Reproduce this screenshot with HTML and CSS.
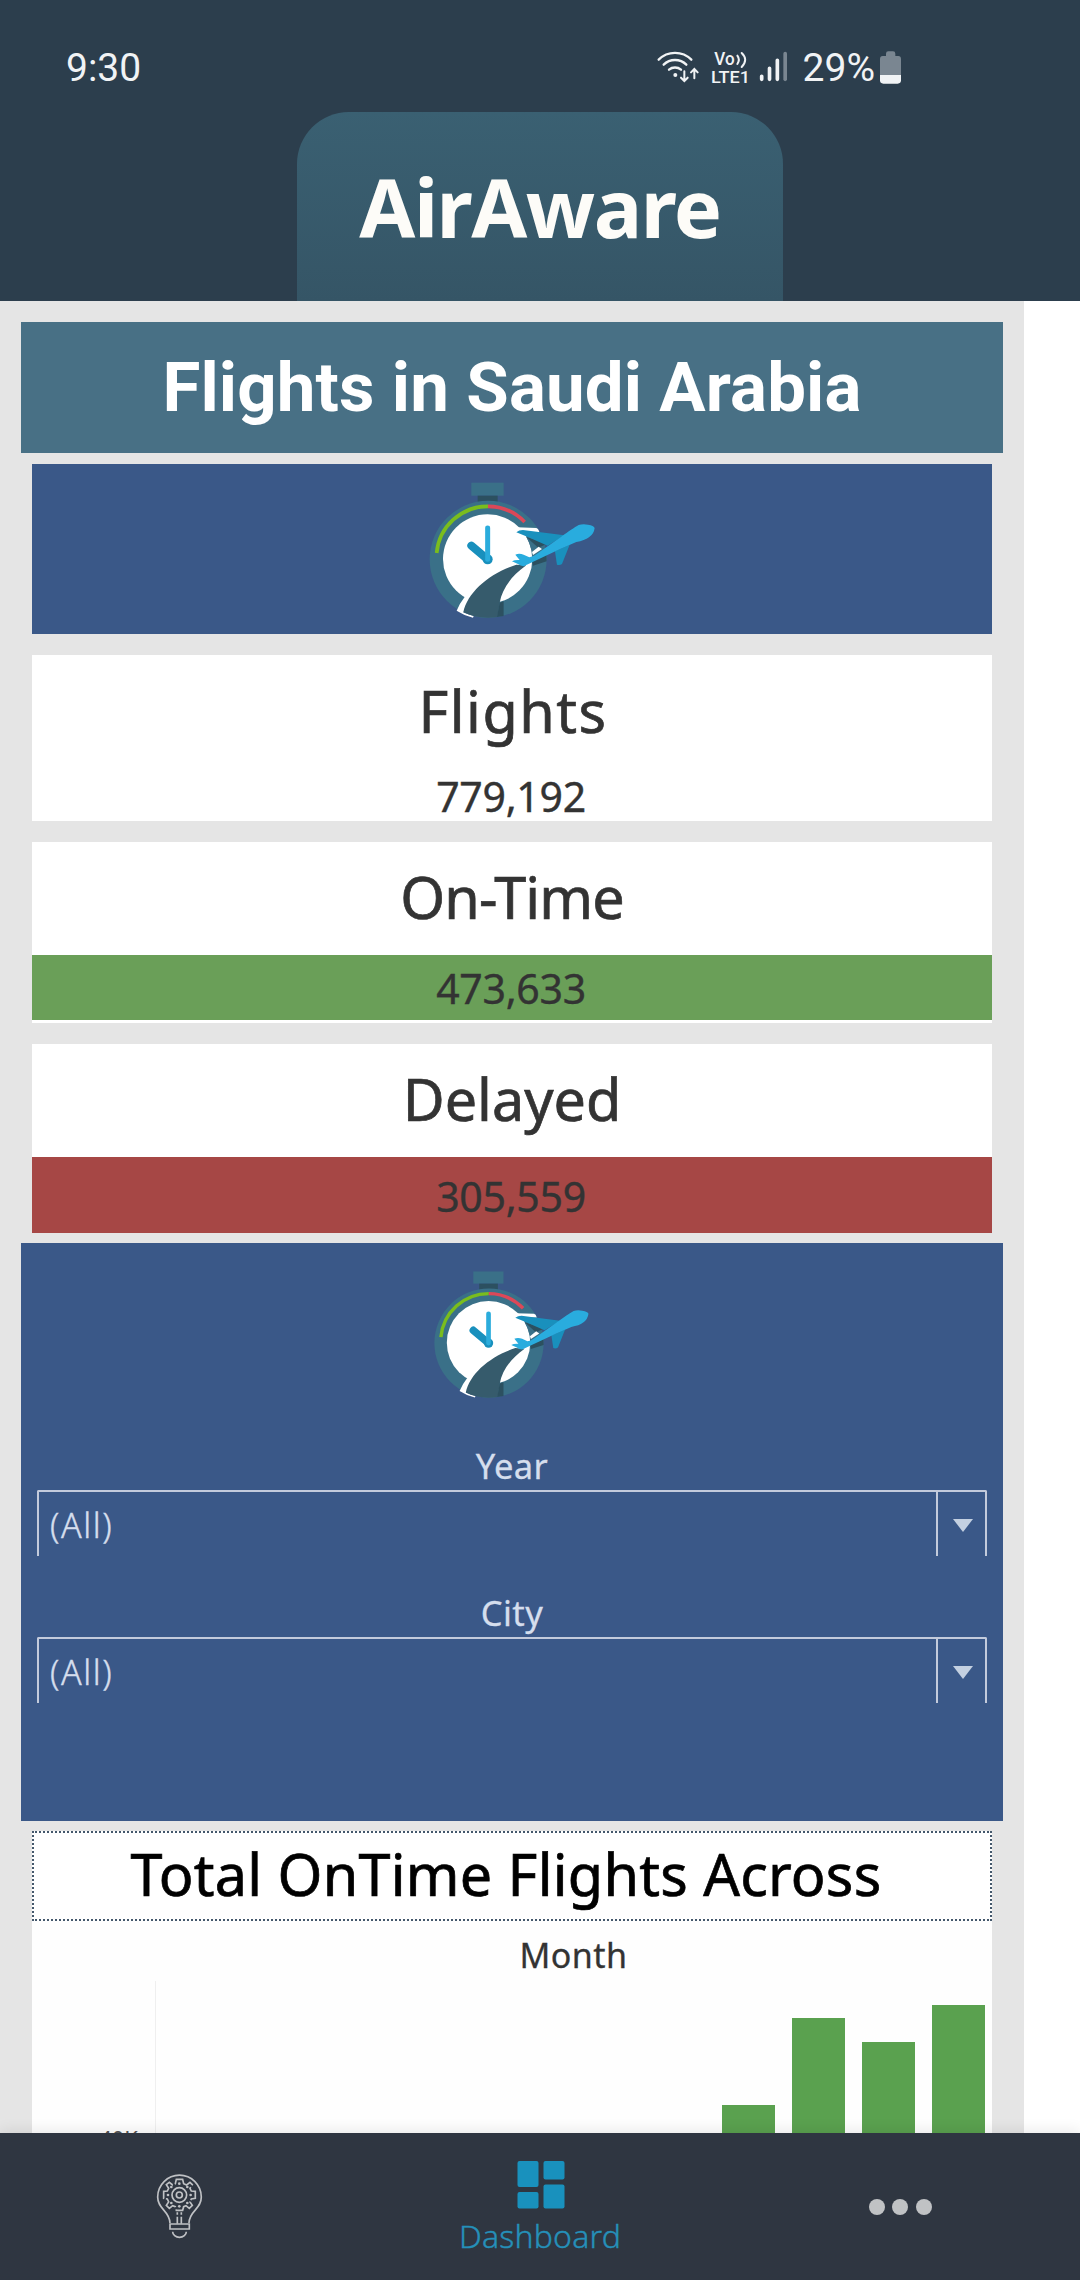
FILE: index.html
```html
<!DOCTYPE html>
<html lang="en">
<head>
<meta charset="utf-8">
<title>AirAware</title>
<link rel="stylesheet" href="styles.css">
</head>
<body>
<svg class="defs" width="0" height="0" aria-hidden="true">
  <symbol id="logo" viewBox="76 60 520 425">
    <rect x="215" y="68" width="97" height="39" fill="#3a7088"/>
    <rect x="234" y="107" width="60" height="20" fill="#2c5060"/>
    <circle cx="265.5" cy="298" r="175.5" fill="#3a7088"/>
    <circle cx="264" cy="297" r="134" fill="#fff"/>
    <path d="M111 279A154 154 0 0 1 265 139" fill="none" stroke="#7abd1d" stroke-width="11"/>
    <path d="M265 139A154 154 0 0 1 375 186" fill="none" stroke="#dc4858" stroke-width="11"/>
    <path d="M352 202L410 204Q416 205 419 216L372 216Z" fill="#fff"/>
    <path d="M380 231L445 250L417 262L397 276Q391 250 380 231Z" fill="#3a7088"/>
    <path d="M380 231L445 250L416 263Z" fill="#2c5060"/>
    <path d="M397 276L417 260L427 267L400 285Z" fill="#fff"/>
    <path d="M398 304L440 276L441 304L400 317Z" fill="#2c5060"/>
    <path d="M215 257L264 298" stroke="#1990bd" stroke-width="24" stroke-linecap="round"/>
    <circle cx="264" cy="298" r="15" fill="#1990bd"/>
    <path d="M264 204V298" stroke="#2bacdc" stroke-width="15" stroke-linecap="round"/>
    <path d="M195 411Q180 430 171 452Q192 466 220 473L222 468Q205 464 191 457L240 390Z" fill="#fff"/>
    <path d="M191 457C204 395 270 340 350 314L380 316C335 348 308 385 300 428L293 471C255 477 220 471 191 457Z" fill="#365b6c"/>
    <path d="M300 428L312 424V468L292 471Z" fill="#2c5060"/>
    <path d="M350 217Q358 210 370 210L494 226L444 257L383 230Z" fill="#1990bd"/>
    <path d="M466 274L510 254L487 312Q480 317 472 314Z" fill="#1990bd"/>
    <path d="M372 319Q362 318 355 312L337 304Q345 299 360 300L347 284Q358 279 372 284L389 292Q400 291 410 283L487 229C505 215 525 202 537 195Q550 191 565 194Q583 197 585 204Q583 222 568 232Q555 242 530 246L480 268Z" fill="#29acde"/>
  </symbol>
</svg>

<header class="header">
  <div class="status">
    <span class="status-time">9:30</span>
    <div class="status-right">
      <svg class="signals" viewBox="50 60 395 110">
        <g fill="none" stroke="#f1f3f5" stroke-linecap="round">
          <path d="M55 92A69 69 0 0 1 153 92" stroke-width="7"/>
          <path d="M70 107A48 48 0 0 1 138 107" stroke-width="7"/>
          <path d="M86 122A28 28 0 0 1 122 122" stroke-width="7"/>
          <path d="M132 127V155M122 146L132 156L142 146" stroke-width="6"/>
          <path d="M162 148V121M152 130L162 120L172 130" stroke-width="6"/>
          <path d="M291 80Q300 92 291 105M304 72Q325 92 304 114" stroke-width="6"/>
        </g>
        <circle cx="105" cy="138" r="6" fill="#f1f3f5"/>
        <text class="signal-text" x="222" y="108" font-size="53" textLength="61" lengthAdjust="spacingAndGlyphs">Vo</text>
        <text class="signal-text" x="212" y="161" font-size="52" textLength="117" lengthAdjust="spacingAndGlyphs">LTE1</text>
        <g stroke-width="11" stroke-linecap="round" stroke="#f1f3f5">
          <path d="M364 142V151M387.500 118V151M411 94V151"/>
          <path d="M434.500 74V151" stroke="#7a8691"/>
        </g>
      </svg>
      <span class="battery-text">29%</span>
      <svg class="battery" viewBox="0 0 63 99">
        <path d="M18 8Q18 1 25 1H39Q46 1 46 8V15H55Q63 15 63 24V73H0V24Q0 15 8 15H18Z" fill="#7a8691"/>
        <path d="M0 72H63V88Q63 98 53 98H10Q0 98 0 88Z" fill="#f1f3f5"/>
      </svg>
    </div>
  </div>
  <h1 class="brand">AirAware</h1>
</header>

<main class="content">
  <div class="dashboard">
    <h2 class="title">Flights in Saudi Arabia</h2>
    <div class="banner"><svg class="logo"><use href="#logo"/></svg></div>

    <section class="card card-flights">
      <h3 class="card-label wide">Flights</h3>
      <div class="card-value">779,192</div>
    </section>
    <section class="card card-ontime">
      <h3 class="card-label tight">On-Time</h3>
      <div class="card-value">473,633</div>
    </section>
    <section class="card card-delayed">
      <h3 class="card-label">Delayed</h3>
      <div class="card-value">305,559</div>
    </section>

    <section class="filters">
      <svg class="logo logo-small"><use href="#logo"/></svg>
      <div class="filter">
        <div class="filter-label">Year</div>
        <div class="select"><span class="select-value">(All)</span><span class="select-arrow"><svg viewBox="0 0 20 13"><path d="M0 0H20L10 13Z"/></svg></span></div>
      </div>
      <div class="filter">
        <div class="filter-label">City</div>
        <div class="select"><span class="select-value">(All)</span><span class="select-arrow"><svg viewBox="0 0 20 13"><path d="M0 0H20L10 13Z"/></svg></span></div>
      </div>
    </section>

    <h3 class="chart-title">Total OnTime Flights Across</h3>
    <section class="chart">
      <div class="chart-heading">Month</div>
      <div class="axis">40K</div>
      <div class="plot">
        <div class="bar" style="height:28.500px"></div>
        <div class="bar" style="height:115.500px"></div>
        <div class="bar" style="height:91.500px"></div>
        <div class="bar" style="height:128.500px"></div>
      </div>
    </section>
  </div>
</main>

<nav class="nav">
  <a class="nav-item nav-tips">
    <svg class="bulb" viewBox="78 100 142 198" fill="none" stroke="#bfc1c4" stroke-width="5">
      <path d="M120 250C119 212 83 210 83 172A65.500 65.500 0 0 1 214 172C214 210 178 212 177 250"/>
      <path d="M120 253H178V268H120ZM128 276A20.500 17 0 0 0 169 276"/>
      <path d="M142 218V225M154 218V225M142 231V252M154 231V252"/>
      <circle cx="148" cy="166" r="22"/>
      <circle cx="148" cy="166" r="9"/>
      <path d="M136 132L139 119H158L161 132L170 136L180 128L187 135L180 146L184 154L196 155V176L184 178L180 187L187 197L178 206L168 198L161 201L158 212H139L136 201L128 198L118 206L109 197L116 187L112 178L101 176V155L112 154L116 146L109 135L118 128L128 136Z" stroke-dasharray="80 7 62 5"/>
      <g fill="#bfc1c4" stroke="none"><circle cx="148" cy="132" r="4"/><circle cx="148" cy="200" r="4"/><circle cx="114" cy="166" r="4"/><circle cx="182" cy="166" r="4"/><circle cx="124" cy="142" r="4"/><circle cx="172" cy="142" r="4"/><circle cx="124" cy="190" r="4"/><circle cx="172" cy="190" r="4"/></g>
    </svg>
  </a>
  <a class="nav-item nav-dashboard">
    <svg class="tiles" viewBox="0 0 48 48" fill="#1991bd">
      <rect x="0.500" y="0" width="21" height="26" rx="2"/>
      <rect x="0.500" y="31" width="21" height="16.500" rx="2"/>
      <rect x="26.500" y="0" width="21" height="18.500" rx="2"/>
      <rect x="26.500" y="23.500" width="21" height="24" rx="2"/>
    </svg>
    <span class="nav-label">Dashboard</span>
  </a>
  <a class="nav-item nav-more"><i class="dot"></i><i class="dot"></i><i class="dot"></i></a>
</nav>
</body>
</html>
```
FILE: styles.css
```css
* { box-sizing: border-box; }

body {
  margin: 0;
  width: 1080px;
  height: 2280px;
  display: flex;
  flex-direction: column;
  overflow: hidden;
  background: #fff;
  font-family: "Noto Sans", "Open Sans", sans-serif;
}

h1, h2, h3 { margin: 0; font-weight: 400; }
svg { display: block; flex: none; }
.defs { position: absolute; }

/* Header */
.header {
  flex: none;
  height: 301px;
  display: flex;
  flex-direction: column;
  align-items: center;
  background: #2c3e4d;
}
.status {
  width: 100%;
  height: 112px;
  padding: 23px 179px 0 66px;
  display: flex;
  align-items: center;
  justify-content: space-between;
  font: 400 39px/46px Roboto, sans-serif;
  color: #f1f3f5;
}
.status-right { display: flex; align-items: center; }
.signals { width: 131.700px; height: 36.700px; margin-right: 14px; }
.signal-text { font-family: Roboto, sans-serif; font-weight: 500; fill: #f1f3f5; }
.battery-text { margin-right: 5px; }
.battery { width: 21px; height: 33px; }
.brand {
  width: 486px;
  height: 189px;
  border-radius: 52px 52px 0 0;
  background: linear-gradient(#3a6072, #355566);
  color: #fdfcf8;
  font-size: 81px;
  font-weight: 700;
  line-height: 189px;
  letter-spacing: -1.500px;
  text-align: center;
}

/* Dashboard */
.content { flex: none; height: 1832px; overflow: hidden; }
.dashboard {
  width: 1024px;
  height: 100%;
  padding: 21px 32px 0;
  display: flex;
  flex-direction: column;
  background: #e5e5e5;
  color: #333;
  text-align: center;
}
.dashboard > * { flex: none; }
.title {
  height: 131px;
  margin: 0 -11px 11px;
  background: #487085;
  color: #fff;
  font: 700 69px/131px Roboto, sans-serif;
  letter-spacing: 0.120px;
}
.banner {
  height: 170px;
  margin-bottom: 21px;
  padding-top: 16px;
  display: flex;
  justify-content: center;
  background: #3a5888;
}
.logo { width: 173.300px; height: 141.700px; }
.logo-small { width: 161.900px; height: 132.300px; margin: 0 0 41.700px 393.400px; }

.card { margin-bottom: 21px; background: #fff; }
.card-label {
  height: 113px;
  font-size: 57.500px;
  line-height: 110px;
  -webkit-text-stroke: 0.700px currentColor;
}
.card-label.wide { letter-spacing: 1.500px; padding-left: 2px; }
.card-label.tight { letter-spacing: -0.900px; }
.card-value {
  font-size: 41px;
  padding-right: 2px;
  letter-spacing: -0.300px;
  -webkit-text-stroke: 0.400px currentColor;
}
.card-flights { height: 166px; }
.card-flights .card-label { height: 111px; line-height: 112px; }
.card-flights .card-value { line-height: 60px; }
.card-ontime { height: 181px; }
.card-ontime .card-value { height: 65px; line-height: 67px; background: #6a9f58; }
.card-delayed { height: 189px; margin-bottom: 10px; }
.card-delayed .card-value { height: 76px; line-height: 78px; background: #a64745; }

/* Filters */
.filters {
  height: 578px;
  margin: 0 -11px 10px;
  padding: 26px 16px 0;
  background: #3a5888;
}
.filter { margin-bottom: 34px; color: #d5deed; }
.filter-label {
  height: 47px;
  font-size: 34.500px;
  line-height: 46px;
  letter-spacing: 0.400px;
  -webkit-text-stroke: 0.300px currentColor;
}
.select {
  height: 66px;
  display: flex;
  border: 2px solid #c3cbdc;
  border-bottom: 0;
  border-radius: 2px 2px 0 0;
}
.select-value {
  flex: 1;
  padding-left: 11px;
  font-size: 34px;
  font-weight: 300;
  line-height: 66px;
  letter-spacing: 1.600px;
  text-align: left;
  -webkit-text-stroke: 0.400px currentColor;
}
.select-arrow {
  width: 49px;
  padding: 27px 0 0 15px;
  border-left: 2px solid #c3cbdc;
}
.select-arrow svg { width: 20px; height: 13px; fill: #c3d0e1; }

/* Chart */
.chart-title {
  height: 90px;
  padding-right: 12px;
  border: 2px dotted #44586c;
  background: #fff;
  color: #000;
  font-size: 57.500px;
  line-height: 83px;
  letter-spacing: 0.240px;
  -webkit-text-stroke: 0.700px currentColor;
}
.chart {
  height: 212px;
  display: grid;
  grid-template: 60px 152px / 123px 1fr;
  background: #fefefe;
}
.chart-heading { grid-column: 2; font-size: 34px; line-height: 69px; letter-spacing: 0.500px; -webkit-text-stroke: 0.300px currentColor; }
.axis { padding: 142px 17px 0 0; font-size: 22px; line-height: 31px; text-align: right; color: #555; }
.plot {
  padding-right: 7.500px;
  display: flex;
  align-items: flex-end;
  justify-content: flex-end;
  gap: 17.300px;
  border-left: 1px solid #efefef;
}
.bar { width: 52.700px; background: #5aa14f; }

/* Bottom navigation */
.nav {
  position: relative;
  flex: none;
  height: 147px;
  display: grid;
  grid-template-columns: repeat(3, 1fr);
  background: #2f3641;
  box-shadow: 0 -2px 14px rgba(0, 0, 0, 0.09);
}
.nav-item { display: flex; justify-content: center; }
.nav-tips { padding-top: 40px; }
.bulb { width: 47.300px; height: 66px; }
.nav-dashboard { flex-direction: column; align-items: center; justify-content: flex-start; padding-top: 28px; }
.tiles { width: 48px; height: 48px; margin-left: 1px; }
.nav-label {
  font-size: 32px;
  font-weight: 300;
  line-height: 53px;
  letter-spacing: 0.200px;
  color: #2590b9;
  -webkit-text-stroke: 0.400px currentColor;
}
.nav-more { align-items: center; gap: 7.500px; }
.dot { width: 16px; height: 16px; border-radius: 50%; background: #c0c2c4; }
```
